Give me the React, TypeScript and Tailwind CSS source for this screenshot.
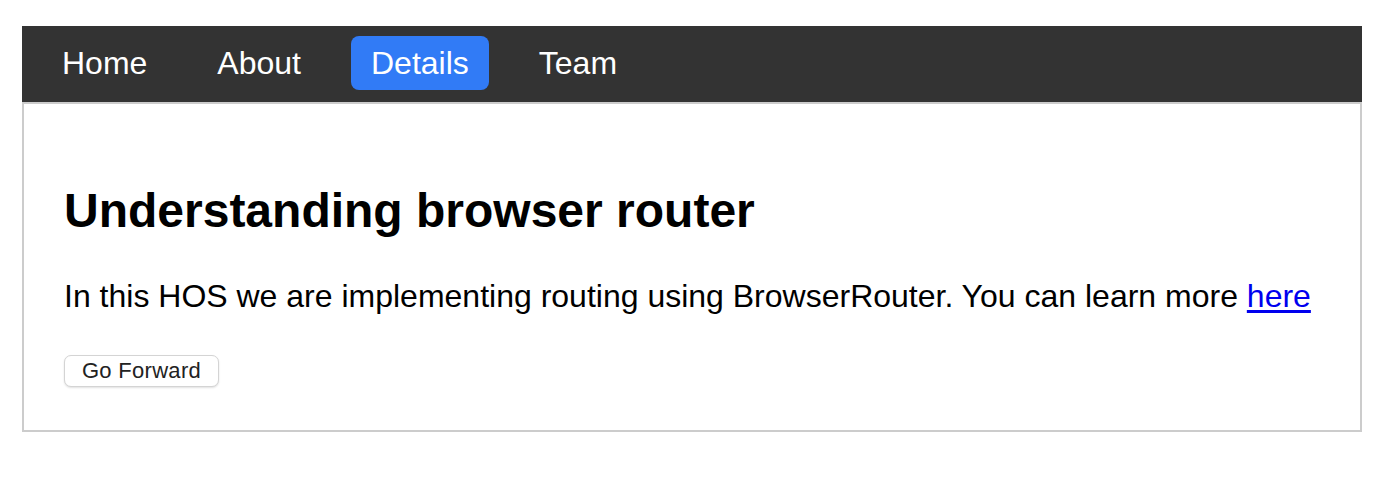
import { useState } from "react";

const links = ["Home", "About", "Details", "Team"];

function NavBar(props: { active: string; onSelect: (name: string) => void }) {
    const { active, onSelect } = props;
    return (
        <nav className="flex items-start gap-[30px] bg-[#333333] h-[76px] px-[20px] pt-[10px]">
            {links.map((name) => (
                <a
                    key={name}
                    href="#"
                    onClick={(e) => {
                        e.preventDefault();
                        onSelect(name);
                    }}
                    className={`px-[20px] h-[54px] text-[32px] leading-[54px] text-white rounded-[8px] ${active === name ? "bg-[#317bf6]" : ""}`}
                >
                    {name}
                </a>
            ))}
        </nav>
    );
}

export default function App() {
    const [active, setActive] = useState("Details");

    return (
        <div className="min-h-screen bg-white pt-[26px] pl-[22px]" style={{ fontFamily: '"Liberation Sans", Arial, sans-serif' }}>
            <div className="w-[1340px]">
                <NavBar active={active} onSelect={setActive} />

                {/* Contenido de la ruta */}
                <div className="border-2 border-[#cccccc] px-[40px] pt-[79px] pb-[43px]">
                    <h1 className="text-[48px] leading-[56px] font-bold text-black">
                        Understanding browser router
                    </h1>
                    <p className="mt-[37px] text-[32px] leading-[40px] text-black">
                        In this HOS we are implementing routing using BrowserRouter. You can learn more{" "}
                        <a href="#" className="text-[#0000ee] underline underline-offset-[3px]">here</a>
                    </p>
                    <button
                        type="button"
                        className="mt-[39px] w-[155px] h-[32px] text-[22px] leading-[30px] tracking-[0.3px] text-[#222222] bg-white border border-[#d4d4d4] rounded-[7px] shadow-[0_1px_2px_rgba(0,0,0,0.12)]"
                    >
                        Go Forward
                    </button>
                </div>
            </div>
        </div>
    );
}
